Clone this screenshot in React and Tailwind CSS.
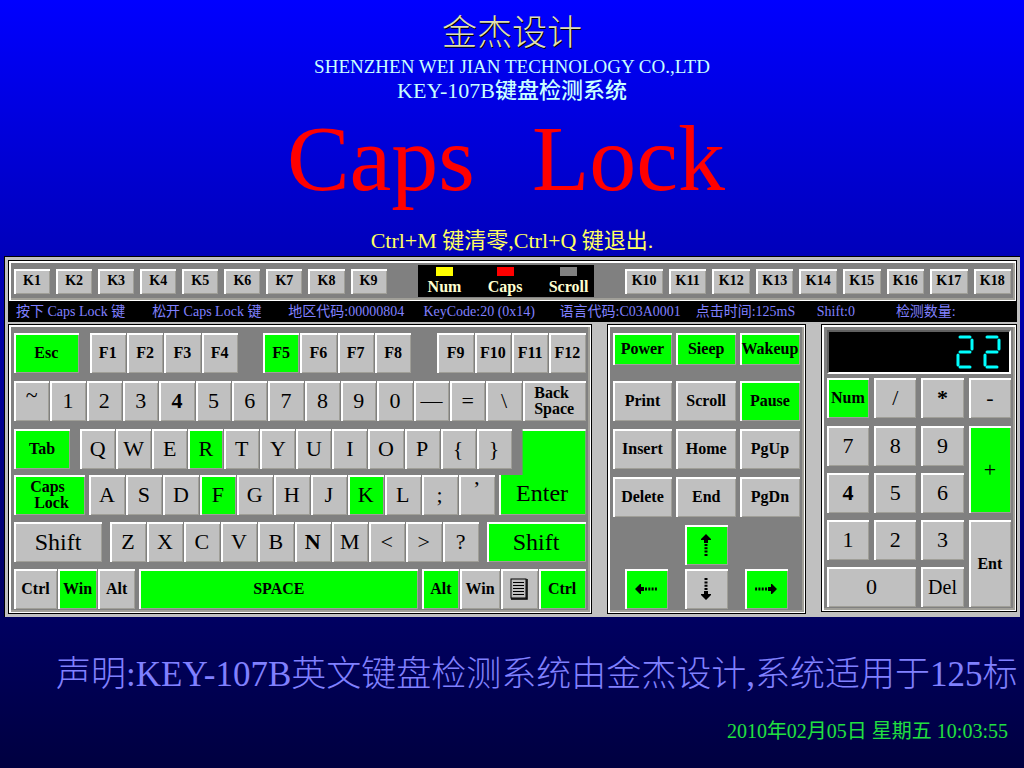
import React from 'react';
import clsx from 'clsx';

const bevel = 'shadow-[inset_2px_2px_0_#fff,inset_-1px_-1px_0_#a09f98]';
const cjk = 'font-["Liberation_Serif","Noto_Sans_CJK_SC",serif]';

// plain keys of one width, e.g. same('QWE', 36)
const same = (chars, w, lit = '', bold = '') =>
  chars.split('').map((c) => ({ label: c, w, on: lit.includes(c), bold: bold.includes(c) }));

const fKeys = (from, lit) =>
  [0, 1, 2, 3].map((i) => ({ label: `F${from + i}`, w: 36, small: true, on: lit === from + i }));

const functionRow = [
  { label: 'Esc', w: 64, small: true, on: true },
  { space: 9 },
  ...fKeys(1),
  { space: 23 },
  ...fKeys(5, 5),
  { space: 24 },
  ...fKeys(9),
];

const numberRow = [
  { label: '~', w: 36, up: true },
  ...same('1234567890', 36, '', '4'),
  { label: '—', w: 36 },
  ...same('=\\', 36),
  { label: 'Back\nSpace', w: 64, small: true },
];

const tabRow = [
  { label: 'Tab', w: 56, small: true, on: true },
  { space: 8 },
  ...same('QWERTYUIOP{}', 35, 'R'),
];

const capsRow = [
  { label: 'Caps\n Lock', w: 71, small: true, on: true },
  { space: 2 },
  ...same('ASDFGHJKL;', 36, 'FK'),
  { label: '’', w: 36, up: true },
];

const shiftRow = [
  { label: 'Shift', w: 88, wide: true },
  { space: 6 },
  ...same('ZXCVBNM<>?', 36, '', 'N'),
  { space: 6 },
  { label: 'Shift', w: 99, on: true, wide: true },
];

const MenuIcon = () => (
  <svg width="18" height="22" viewBox="0 0 18 22" aria-hidden="true">
    <rect x="1" y="1" width="15" height="19" fill="none" stroke="#000" strokeWidth="1" />
    <path d="M17 1V21H1" fill="none" stroke="#000" strokeWidth="1.5" />
    <path d="M3 4.5H14M3 7.5H14M3 10.5H14M3 13.5H14M3 16.5H14" stroke="#000" />
  </svg>
);

const bottomRow = [
  { label: 'Ctrl', w: 43, small: true },
  { label: 'Win', w: 39, small: true, on: true },
  { label: 'Alt', w: 37, small: true },
  { space: 2 },
  { label: 'SPACE', w: 279, small: true, on: true },
  { space: 2 },
  { label: 'Alt', w: 37, small: true, on: true },
  { label: 'Win', w: 39, small: true },
  { label: 'Menu', w: 37, icon: <MenuIcon /> },
  { label: 'Ctrl', w: 47, small: true, on: true },
];

const navKeys = [
  { label: 'Print' },
  { label: 'Scroll' },
  { label: 'Pause', on: true },
  { label: 'Insert' },
  { label: 'Home' },
  { label: 'PgUp' },
  { label: 'Delete' },
  { label: 'End' },
  { label: 'PgDn' },
];

const numpad = [
  ...same('789', 0),
  { label: '+', on: true, className: 'row-span-2 h-full' },
  ...same('456', 0, '', '4'),
  ...same('123', 0),
  { label: 'Ent', small: true, className: 'row-span-2 h-full' },
  { label: '0', className: 'col-span-2 h-10' },
  { label: 'Del', light: true },
];

const status = [
  '按下 Caps Lock 键',
  '松开 Caps Lock 键',
  '地区代码:00000804',
  'KeyCode:20 (0x14)',
  '语言代码:C03A0001',
  '点击时间:125mS',
  'Shift:0',
  '检测数量:',
];

const Key = ({ label, w, on, small, light, wide, bold, up, icon, className = 'h-10' }) => (
  <button
    type="button"
    aria-label={icon ? label : undefined}
    style={w ? { flexGrow: w } : undefined}
    className={clsx(
      'flex min-w-0 basis-0 justify-center whitespace-pre text-left text-black',
      bevel,
      up ? 'items-start' : 'items-center',
      on ? 'bg-[#00ff00]' : 'bg-[#c0c0c0]',
      small && 'text-base leading-4 font-bold',
      light && 'text-xl',
      wide && 'text-2xl',
      !small && !light && !wide && 'text-[22px] leading-7',
      bold && 'font-bold',
      className
    )}
  >
    {icon || label}
  </button>
);

const Row = ({ keys, className }) => (
  <div className={clsx('flex gap-px', className)}>
    {keys.map((k, i) =>
      k.space ? <span key={i} className="basis-0" style={{ flexGrow: k.space }} /> : <Key key={i} {...k} />
    )}
  </div>
);

const KRow = ({ from, to }) => (
  <div className="flex items-center gap-[6px]">
    {Array.from({ length: to - from + 1 }, (_, i) => (
      <button
        key={i}
        type="button"
        className={clsx('h-[25px] flex-1 basis-0 bg-[#c0c0c0] text-sm leading-4 font-bold', bevel)}
      >
        K{from + i}
      </button>
    ))}
  </div>
);

const Led = ({ name, color }) => (
  <div className="flex flex-col items-center">
    <span className={clsx('h-[9px] w-[17px]', color)} />
    <span className="mt-[3px] text-base leading-4 font-bold text-[#ffffd0]">{name}</span>
  </div>
);

const turns = { up: '', right: 'rotate-90', down: 'rotate-180', left: '-rotate-90' };

const Arrow = ({ dir }) => (
  <svg width="12" height="22" viewBox="0 0 12 22" className={turns[dir]} aria-hidden="true">
    <path d="M6 0L11 5V6H8V9H4V6H1V5Z" />
    <path d="M6 10V22" stroke="#000" strokeWidth="3" strokeDasharray="2 1.3" />
  </svg>
);

const ArrowKey = ({ dir, on }) => (
  <Key label={dir} on={on} icon={<Arrow dir={dir} />} className="h-10 w-[43px] basis-auto" />
);

// seven-segment cells, only the lit segments are listed
const segments = {
  2: ['M4 2H14', 'M16 5V14', 'M4 17H14', 'M2 20V30', 'M4 32H14'],
};

const Counter = ({ value }) => (
  <div
    role="img"
    aria-label={value}
    className="flex h-[44px] items-center justify-end gap-[9px] border-2 border-t-[#606060] border-r-white border-b-white border-l-[#606060] bg-black pr-2"
  >
    {value.split('').map((d, i) => (
      <svg key={i} width="18" height="34" viewBox="0 0 18 34" aria-hidden="true">
        {segments[d].map((s) => (
          <path key={s} d={s} fill="none" stroke="#00ffff" strokeWidth="3" strokeLinecap="round" />
        ))}
      </svg>
    ))}
  </div>
);

const Panel = ({ children, className }) => (
  <div
    className={clsx(
      'border border-black bg-[#808080] shadow-[inset_2px_2px_0_#fff,inset_-1px_-1px_0_#fff,inset_-3px_-3px_0_#a09f98]',
      className
    )}
  >
    {children}
  </div>
);

export default function App() {
  return (
    <div
      className={clsx(
        'flex min-h-screen flex-col overflow-hidden bg-linear-to-b from-[#0000ff] to-[#000040]',
        cjk
      )}
    >
      <header className="flex flex-col items-center pt-4 text-[#c8ffff]">
        <h1 className="text-[35px] leading-9 font-light text-[#e0e0b0] [text-shadow:1px_1px_0_#000]">
          金杰设计
        </h1>
        <p className="mt-[3px] text-[19px] leading-6">SHENZHEN WEI JIAN TECHNOLOGY CO.,LTD</p>
        <p className="text-[22px] leading-6 font-medium">KEY-107B键盘检测系统</p>
        <p className="mr-3 flex gap-[57px] text-[94px] leading-[110px] text-[#ff0000]">
          <span>Caps</span>
          <span>Lock</span>
        </p>
        <p className="mt-4 text-[22px] leading-6 text-[#ffff60]">Ctrl+M 键清零,Ctrl+Q 键退出.</p>
      </header>

      <main className="mx-1 mt-[3px] border border-r-0 border-b-0 border-black bg-[#c0c0c0] p-[3px]">
        <Panel className="grid h-[42px] grid-cols-[373fr_177fr_386fr] items-center gap-[31px] px-[5px]">
          <KRow from={1} to={9} />
          <div className="flex h-8 items-center justify-between bg-black pr-[6px] pl-[10px]">
            <Led name="Num" color="bg-[#ffff00]" />
            <Led name="Caps" color="bg-[#ff0000]" />
            <Led name="Scroll" color="bg-[#808080]" />
          </div>
          <KRow from={10} to={18} />
        </Panel>
        <div className="grid grid-cols-[136fr_136fr_135fr_136fr_136fr_121fr_79fr_121fr] bg-black pl-2 text-sm leading-5 whitespace-nowrap text-[#8080ff]">
          {status.map((s) => (
            <span key={s}>{s}</span>
          ))}
        </div>

        <div className="mt-[2px] grid grid-cols-[583fr_199fr_196fr] items-start gap-[15px]">
          <Panel className="px-[5px] pt-2 pb-1">
            <Row keys={functionRow} />
            <Row keys={numberRow} className="mt-2" />
            <div className="mt-2 flex gap-1">
              <div className="flex-1">
                <Row keys={tabRow} className="-mr-[17px]" />
                <Row keys={capsRow} className="mt-[6px]" />
              </div>
              <button
                type="button"
                className={clsx(
                  'flex w-[87px] items-end justify-center bg-[#00ff00] pb-[6px] text-2xl [clip-path:polygon(24px_0,100%_0,100%_100%,0_100%,0_46px,24px_46px)]',
                  bevel
                )}
              >
                Enter
              </button>
            </div>
            <Row keys={shiftRow} className="mt-[7px]" />
            <Row keys={bottomRow} className="mt-[7px]" />
          </Panel>

          <Panel className="px-[5px] pt-2 pb-1">
            <div className="grid grid-cols-3 gap-1">
              <Key label="Power" small on className="h-8" />
              <Key label="Sieep" small on className="h-8" />
              <Key label="Wakeup" small on className="h-8" />
            </div>
            <div className="mt-4 grid grid-cols-3 gap-x-1 gap-y-2">
              {navKeys.map((k) => (
                <Key key={k.label} {...k} small />
              ))}
            </div>
            <div className="mt-2 flex justify-center">
              <ArrowKey dir="up" on />
            </div>
            <div className="mt-1 flex justify-center gap-[17px]">
              <ArrowKey dir="left" on />
              <ArrowKey dir="down" />
              <ArrowKey dir="right" on />
            </div>
          </Panel>

          <Panel className="px-[5px] pt-[5px] pb-1">
            <Counter value="22" />
            <div className="mt-1 grid grid-cols-4 gap-x-[5px]">
              <Key label="Num" small on />
              <Key label="/" />
              <Key label="*" bold />
              <Key label="-" />
            </div>
            <div className="mt-2 grid grid-cols-4 gap-x-[5px] gap-y-[7px]">
              {numpad.map((k) => (
                <Key key={k.label} {...k} />
              ))}
            </div>
          </Panel>
        </div>
      </main>

      <footer className="whitespace-nowrap">
        <p className="mt-[34px] pl-14 text-[35px] leading-[48px] font-light text-[#8080ff]">
          声明:KEY-107B英文键盘检测系统由金杰设计,系统适用于125标
        </p>
        <p className="mt-5 pr-4 text-right text-xl leading-6 text-[#20e040]">
          2010年02月05日 星期五 10:03:55
        </p>
      </footer>
    </div>
  );
}
